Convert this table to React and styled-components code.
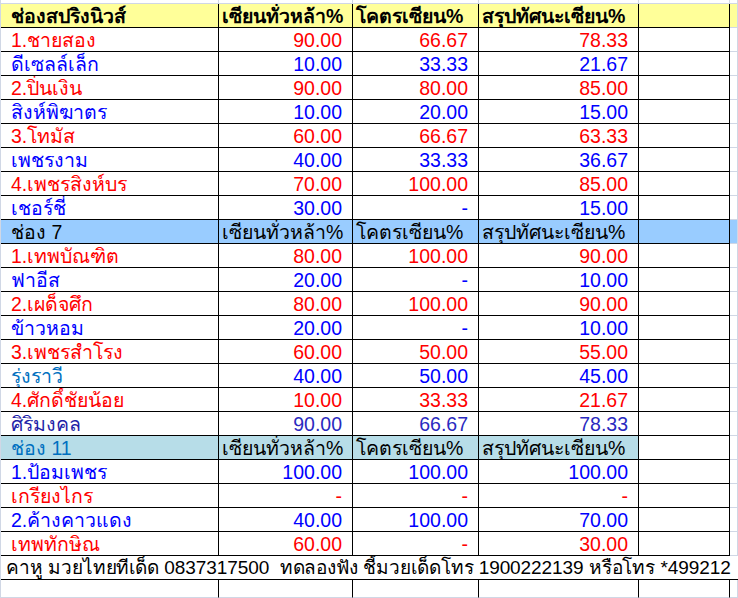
import React from 'react';
import styled, { createGlobalStyle } from 'styled-components';

const GlobalStyle = createGlobalStyle`
  html, body {
    margin: 0;
    padding: 0;
    background: #fff;
    overflow: hidden;
  }
  body {
    font-family: "Liberation Sans", "Noto Sans", sans-serif;
  }
`;

const RED = '#ff0000';
const BLUE = '#0000ff';
const GRID = '#d0d7e5';
const COLS = '218px 134px 126px 160px 91px 1fr';

const Sheet = styled.div`
  width: 738px;
  height: 598px;
  overflow: hidden;
  box-sizing: border-box;
  border-left: 1px solid ${GRID};
`;

const Row = styled.div`
  display: grid;
  grid-template-columns: ${COLS};
  height: ${(p) => p.$h || 24}px;
`;

const Cell = styled.div`
  box-sizing: border-box;
  height: 100%;
  padding: 1px ${(p) => (p.$align === 'right' ? 10 : 3)}px 0
    ${(p) => (p.$first ? 10 : 3)}px;
  line-height: 22px;
  font-size: 19.5px;
  white-space: nowrap;
  overflow: hidden;
  text-align: ${(p) => p.$align || 'left'};
  color: ${(p) => p.$color || '#000'};
  font-weight: ${(p) => (p.$bold ? 700 : 400)};
  background: ${(p) => p.$bg || 'transparent'};
  border-right: 1px solid ${(p) => (p.$grid ? GRID : '#000')};
  border-bottom: 1px solid ${(p) => (p.$topGrid || p.$grid ? GRID : '#000')};
`;

const Banner = styled.div`
  grid-column: 1 / -1;
  box-sizing: border-box;
  padding: 1px 0 0 5px;
  line-height: 22px;
  font-size: 19px;
  letter-spacing: -0.08px;
  white-space: nowrap;
  overflow: hidden;
  color: #000;
  border-bottom: 1px solid #000;
`;

const sections = [
  {
    title: 'ช่องสปริงนิวส์',
    titleColor: '#000',
    bg: '#ffff99',
    tailBg: '#ffff99',
    bold: true,
    rows: [
      ['1.ชายสอง', RED, RED, '90.00', '66.67', '78.33'],
      ['ดีเซลล์เล็ก', BLUE, BLUE, '10.00', '33.33', '21.67'],
      ['2.ปิ่นเงิน', RED, RED, '90.00', '80.00', '85.00'],
      ['สิงห์พิฆาตร', BLUE, BLUE, '10.00', '20.00', '15.00'],
      ['3.โทมัส', RED, RED, '60.00', '66.67', '63.33'],
      ['เพชรงาม', BLUE, BLUE, '40.00', '33.33', '36.67'],
      ['4.เพชรสิงห์บร', RED, RED, '70.00', '100.00', '85.00'],
      ['เชอร์ชี่', BLUE, BLUE, '30.00', '-', '15.00'],
    ],
  },
  {
    title: 'ช่อง 7',
    titleColor: '#000',
    bg: '#99ccff',
    tailBg: '#99ccff',
    rows: [
      ['1.เทพบัณฑิต', RED, RED, '80.00', '100.00', '90.00'],
      ['ฟาอีส', BLUE, BLUE, '20.00', '-', '10.00'],
      ['2.เผด็จศึก', RED, RED, '80.00', '100.00', '90.00'],
      ['ข้าวหอม', BLUE, BLUE, '20.00', '-', '10.00'],
      ['3.เพชรสำโรง', RED, RED, '60.00', '50.00', '55.00'],
      ['รุ่งราวี', '#0070c0', BLUE, '40.00', '50.00', '45.00'],
      ['4.ศักดิ์ชัยน้อย', RED, RED, '10.00', '33.33', '21.67'],
      ['ศิริมงคล', '#1f1fa8', '#2a2ac0', '90.00', '66.67', '78.33'],
    ],
  },
  {
    title: 'ช่อง 11',
    titleColor: '#0070c0',
    bg: '#b7dde8',
    tailBg: null,
    rows: [
      ['1.ป้อมเพชร', BLUE, BLUE, '100.00', '100.00', '100.00'],
      ['เกรียงไกร', RED, RED, '-', '-', '-'],
      ['2.ค้างคาวแดง', BLUE, BLUE, '40.00', '100.00', '70.00'],
      ['เทพทักษิณ', RED, RED, '60.00', '-', '30.00'],
    ],
  },
];

const headings = ['เซียนทั่วหล้า%', 'โคตรเซียน%', 'สรุปทัศนะเซียน%'];

function Section({ s }) {
  return (
    <>
      <Row>
        <Cell $first $bg={s.bg} $bold={s.bold} $color={s.titleColor}>
          {s.title}
        </Cell>
        {headings.map((h) => (
          <Cell key={h} $bg={s.bg} $bold={s.bold}>
            {h}
          </Cell>
        ))}
        <Cell $bg={s.tailBg} />
        <Cell $grid $bg={s.tailBg} />
      </Row>
      {s.rows.map(([name, nameColor, numColor, a, b, c]) => (
        <Row key={name}>
          <Cell $first $color={nameColor}>{name}</Cell>
          <Cell $align="right" $color={numColor}>{a}</Cell>
          <Cell $align="right" $color={numColor}>{b}</Cell>
          <Cell $align="right" $color={numColor}>{c}</Cell>
          <Cell />
          <Cell $grid />
        </Row>
      ))}
    </>
  );
}

export default function App() {
  return (
    <Sheet>
      <GlobalStyle />
      <Row $h={4}>
        {[0, 1, 2, 3, 4, 5].map((i) => (
          <Cell key={i} $grid />
        ))}
      </Row>
      {sections.map((s) => (
        <Section key={s.title} s={s} />
      ))}
      <Row>
        <Banner>
          คาหู มวยไทยทีเด็ด 0837317500&nbsp; ทดลองฟัง ชี้มวยเด็ดโทร 1900222139 หรือโทร *499212
        </Banner>
      </Row>
      <Row $h={18}>
        <Cell $topGrid />
        <Cell $topGrid />
        <Cell $topGrid />
        <Cell $topGrid />
        <Cell $topGrid />
        <Cell $grid />
      </Row>
    </Sheet>
  );
}
